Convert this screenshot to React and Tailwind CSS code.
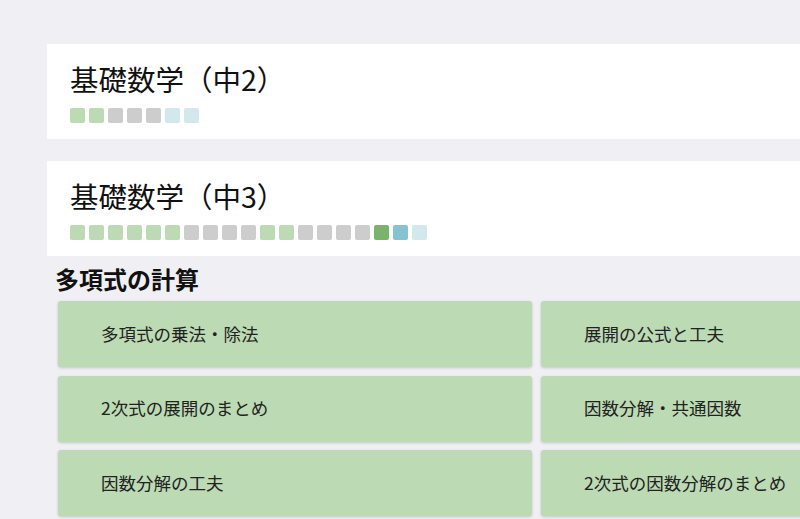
import React from "react";

const font = { fontFamily: '"Noto Sans CJK JP", "Noto Sans", sans-serif' };

// g: done, x: not yet, b: pale blue, G: mastered, B: blue
const COLORS = {
  g: "bg-[#bcdab3]",
  x: "bg-[#cdcdcd]",
  b: "bg-[#d2e8ed]",
  G: "bg-[#7ab46b]",
  B: "bg-[#86c2d0]",
};

const courses = [
  { title: "基礎数学（中2）", progress: "ggxxxbb" },
  { title: "基礎数学（中3）", progress: "ggggggxxxxggxxxxGBb" },
];

const lessons = [
  "多項式の乗法・除法",
  "展開の公式と工夫",
  "2次式の展開のまとめ",
  "因数分解・共通因数",
  "因数分解の工夫",
  "2次式の因数分解のまとめ",
];

const CourseCard = ({ title, progress }) => (
  <div className="bg-white h-[95px] pl-[23px] pt-[17px]">
    <h2 className="text-[28.5px] leading-[36px] text-[#111]">{title}</h2>
    <div className="flex gap-[4px] mt-[11px]">
      {progress.split("").map((p, i) => (
        <span key={i} className={`w-[15px] h-[15px] rounded-[2px] ${COLORS[p]}`} />
      ))}
    </div>
  </div>
);

const App = () => {
  return (
    <div className="w-[800px] h-[519px] overflow-hidden bg-[#efeff4]" style={font}>
      <div className="w-[1100px] pl-[47px] pt-[44px]">
        <div className="flex flex-col gap-[22px]">
          {courses.map((c) => (
            <CourseCard key={c.title} {...c} />
          ))}
        </div>

        <h3 className="text-[24px] font-bold leading-[30px] text-[#111] pl-[8px] mt-[8px]">
          多項式の計算
        </h3>

        <div className="grid grid-cols-[474px_474px] gap-x-[9px] gap-y-[8.5px] pl-[11px] mt-[7px]">
          {lessons.map((l) => (
            <div
              key={l}
              className="h-[66px] bg-[#bcdab3] rounded-[3px] shadow-[0_1px_3px_rgba(0,0,0,0.18)] flex items-center pl-[43px] text-[17.5px] text-[#222]"
            >
              {l}
            </div>
          ))}
        </div>
      </div>
    </div>
  );
};

export default App;
